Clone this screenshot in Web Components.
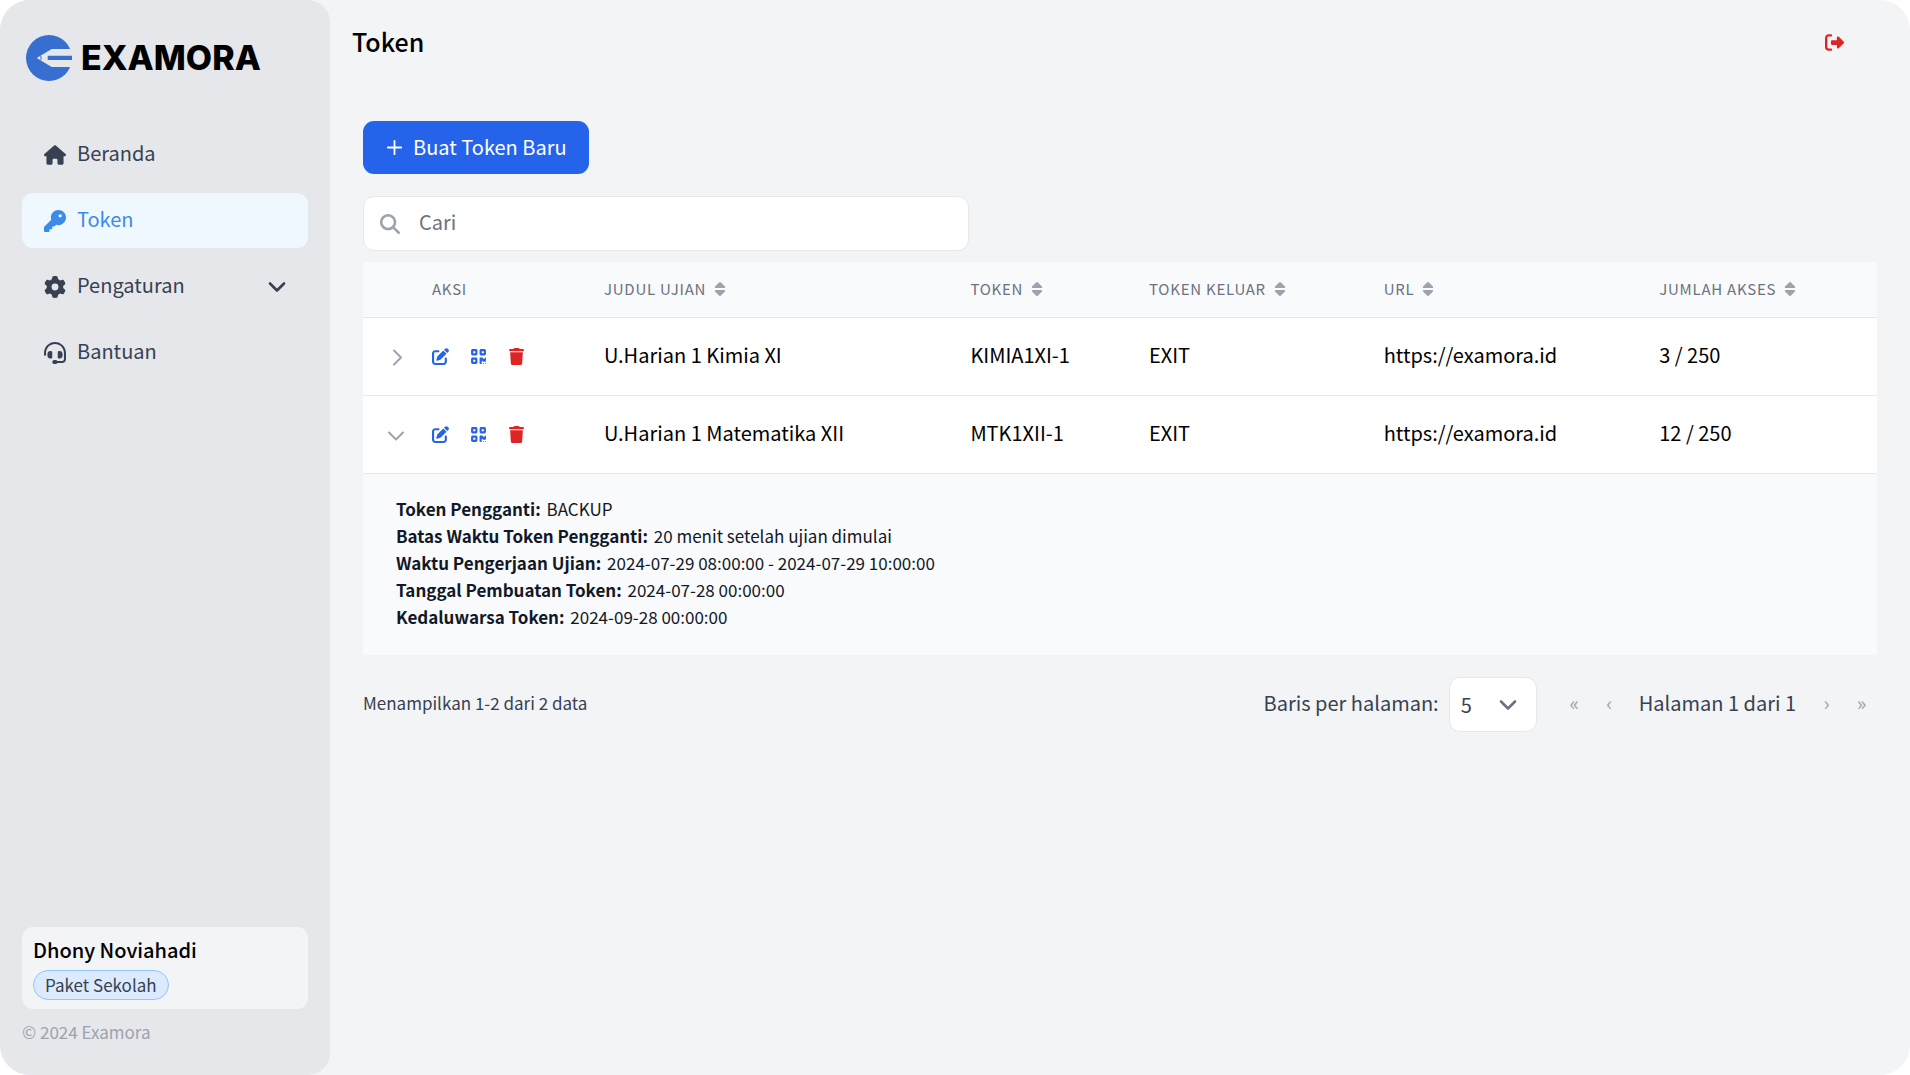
<!DOCTYPE html>
<html lang="id">
<head>
<meta charset="utf-8">
<meta name="viewport" content="width=device-width, initial-scale=1">
<title>Token - Examora</title>
<style>
  html, body { margin: 0; height: 100%; background: #fff; }
  body {
    font-family: "Noto Sans CJK JP", "Noto Sans", sans-serif;
    font-size: 20px;
    line-height: 32px;
    color: #000;
    --ink: #374151;
    --muted: #6b7280;
    --faint: #9ca3af;
    --line: #e5e7eb;
    --blue: #2563eb;
    --red: #dc2626;
    --small: 17px;
    --radius: 11px;
    /* the face sits low in its line box; labels add this below to centre the capitals */
    --lift: 4px;
  }
</style>
</head>
<body>
<exam-app>
  <exam-sidebar slot="sidebar">
    <nav-item icon="home">Beranda</nav-item>
    <nav-item icon="key" active>Token</nav-item>
    <nav-item icon="gear" expandable>Pengaturan</nav-item>
    <nav-item icon="headset">Bantuan</nav-item>
    <user-card slot="footer" plan="Paket Sekolah">Dhony Noviahadi</user-card>
    <span slot="copyright">© 2024 Examora</span>
  </exam-sidebar>
  <page-header slot="header">Token</page-header>
  <token-toolbar></token-toolbar>
  <token-table></token-table>
  <table-pager></table-pager>
</exam-app>

<script>
const ICONS = {
  home: ['0 0 576 512', 'M575.8 255.5c0 18-15 32.1-32 32.1h-32l.7 160.2c0 2.7-.2 5.4-.5 8.1V472c0 22.1-17.9 40-40 40H456c-1.1 0-2.2 0-3.3-.1c-1.4 .1-2.8 .1-4.2 .1H416 392c-22.1 0-40-17.9-40-40V448 384c0-17.7-14.3-32-32-32H256c-17.7 0-32 14.3-32 32v64 24c0 22.1-17.9 40-40 40H160 128.1c-1.5 0-3-.1-4.5-.2c-1.2 .1-2.4 .2-3.6 .2H104c-22.1 0-40-17.9-40-40V360c0-.9 0-1.9 .1-2.8V287.6H32c-18 0-32-14-32-32.1c0-9 3-17 10-24L266.4 8c7-7 15-8 22-8s15 2 21 7L564.8 231.5c8 7 12 15 11 24z'],
  key: ['0 0 512 512', 'M336 352c97.2 0 176-78.8 176-176S433.2 0 336 0S160 78.8 160 176c0 18.7 2.9 36.8 8.3 53.7L7 391c-4.5 4.5-7 10.6-7 17v80c0 13.3 10.7 24 24 24h80c13.3 0 24-10.7 24-24V448h40c13.3 0 24-10.7 24-24V384h40c6.4 0 12.5-2.5 17-7l33.3-33.3c16.9 5.4 35 8.3 53.7 8.3zM376 96a40 40 0 1 1 0 80 40 40 0 1 1 0-80z'],
  gear: ['0 0 512 512', 'M495.9 166.6c3.2 8.7 .5 18.4-6.4 24.6l-43.3 39.4c1.1 8.3 1.7 16.8 1.7 25.4s-.6 17.1-1.7 25.4l43.3 39.4c6.9 6.2 9.6 15.9 6.4 24.6c-4.4 11.9-9.7 23.3-15.8 34.3l-4.7 8.1c-6.6 11-14 21.4-22.1 31.2c-5.9 7.2-15.7 9.6-24.5 6.8l-55.7-17.7c-13.4 10.3-28.2 18.9-44 25.4l-12.5 57.1c-2 9.1-9 16.3-18.2 17.8c-13.8 2.3-28 3.5-42.5 3.5s-28.7-1.2-42.5-3.5c-9.2-1.5-16.2-8.7-18.2-17.8l-12.5-57.1c-15.8-6.5-30.6-15.1-44-25.4L83.1 425.9c-8.8 2.8-18.6 .3-24.5-6.8c-8.1-9.8-15.5-20.2-22.1-31.2l-4.7-8.1c-6.1-11-11.4-22.4-15.8-34.3c-3.2-8.7-.5-18.4 6.4-24.6l43.3-39.4C64.6 273.1 64 264.6 64 256s.6-17.1 1.7-25.4L22.4 191.2c-6.9-6.2-9.6-15.9-6.4-24.6c4.4-11.9 9.7-23.3 15.8-34.3l4.7-8.1c6.6-11 14-21.4 22.1-31.2c5.9-7.2 15.7-9.6 24.5-6.8l55.7 17.7c13.4-10.3 28.2-18.9 44-25.4l12.5-57.1c2-9.1 9-16.3 18.2-17.8C227.3 1.2 241.5 0 256 0s28.7 1.2 42.5 3.5c9.2 1.5 16.2 8.7 18.2 17.8l12.5 57.1c15.8 6.5 30.6 15.1 44 25.4l55.7-17.7c8.8-2.8 18.6-.3 24.5 6.8c8.1 9.8 15.5 20.2 22.1 31.2l4.7 8.1c6.1 11 11.4 22.4 15.8 34.3zM256 336a80 80 0 1 0 0-160 80 80 0 1 0 0 160z'],
  headset: ['0 0 512 512', 'M256 48C141.1 48 48 141.1 48 256v40c0 13.3-10.7 24-24 24s-24-10.7-24-24V256C0 114.6 114.6 0 256 0S512 114.6 512 256V400.1c0 48.6-39.4 88-88.1 88L313.6 488c-8.3 14.3-23.8 24-41.6 24H240c-26.5 0-48-21.5-48-48s21.5-48 48-48h32c17.8 0 33.3 9.7 41.6 24l110.4 .1c22.1 0 40-17.9 40-40V256c0-114.9-93.1-208-208-208zM144 208h16c17.7 0 32 14.3 32 32V352c0 17.7-14.3 32-32 32H144c-35.3 0-64-28.7-64-64V272c0-35.3 28.7-64 64-64zm224 0c35.3 0 64 28.7 64 64v48c0 35.3-28.7 64-64 64H352c-17.7 0-32-14.3-32-32V240c0-17.7 14.3-32 32-32h16z'],
  edit: ['0 0 512 512', 'M471.6 21.7c-21.9-21.9-57.3-21.9-79.2 0L362.3 51.7l97.9 97.9 30.1-30.1c21.9-21.9 21.9-57.3 0-79.2L471.6 21.7zm-299.2 220c-6.1 6.1-10.8 13.6-13.5 21.9l-29.6 88.8c-2.9 8.6-.6 18.1 5.8 24.6s15.9 8.7 24.6 5.8l88.8-29.6c8.2-2.7 15.7-7.4 21.9-13.5L437.7 172.3 339.7 74.3 172.4 241.7zM96 64C43 64 0 107 0 160V416c0 53 43 96 96 96H352c53 0 96-43 96-96V320c0-17.7-14.3-32-32-32s-32 14.3-32 32v96c0 17.7-14.3 32-32 32H96c-17.7 0-32-14.3-32-32V160c0-17.7 14.3-32 32-32h96c17.7 0 32-14.3 32-32s-14.3-32-32-32H96z'],
  qr: ['0 0 448 512', 'M0 80C0 53.5 21.5 32 48 32h96c26.5 0 48 21.5 48 48v96c0 26.5-21.5 48-48 48H48c-26.5 0-48-21.5-48-48V80zM64 96v64h64V96H64zM0 336c0-26.5 21.5-48 48-48h96c26.5 0 48 21.5 48 48v96c0 26.5-21.5 48-48 48H48c-26.5 0-48-21.5-48-48V336zm64 16v64h64V352H64zM304 32h96c26.5 0 48 21.5 48 48v96c0 26.5-21.5 48-48 48H304c-26.5 0-48-21.5-48-48V80c0-26.5 21.5-48 48-48zm80 64H320v64h64V96zM256 304c0-8.8 7.2-16 16-16h64c8.8 0 16 7.2 16 16s7.2 16 16 16h32c8.8 0 16-7.2 16-16s7.2-16 16-16s16 7.2 16 16v96c0 8.8-7.2 16-16 16H368c-8.8 0-16-7.2-16-16s-7.2-16-16-16s-16 7.2-16 16v64c0 8.8-7.2 16-16 16H272c-8.8 0-16-7.2-16-16V304zM368 480a16 16 0 1 1 0-32 16 16 0 1 1 0 32zm64 0a16 16 0 1 1 0-32 16 16 0 1 1 0 32z'],
  trash: ['0 0 448 512', 'M135.2 17.7L128 32H32C14.3 32 0 46.3 0 64S14.3 96 32 96H416c17.7 0 32-14.3 32-32s-14.3-32-32-32H320l-7.2-14.3C307.4 6.8 296.3 0 284.2 0H163.8c-12.1 0-23.2 6.8-28.6 17.7zM416 128H32L53.2 467c1.6 25.3 22.6 45 47.9 45H346.9c25.3 0 46.3-19.7 47.9-45L416 128z'],
  logout: ['0 0 512 512', 'M377.9 105.9L500.7 228.7c7.2 7.2 11.3 17.1 11.3 27.3s-4.1 20.1-11.3 27.3L377.9 406.1c-6.4 6.4-15 9.9-24 9.9c-18.7 0-33.9-15.2-33.9-33.9l0-62.1-128 0c-17.7 0-32-14.3-32-32l0-64c0-17.7 14.3-32 32-32l128 0 0-62.1c0-18.7 15.2-33.9 33.9-33.9c9 0 17.6 3.6 24 9.9zM160 96L96 96c-17.7 0-32 14.3-32 32l0 256c0 17.7 14.3 32 32 32l64 0c17.7 0 32 14.3 32 32s-14.3 32-32 32l-64 0c-53 0-96-43-96-96L0 128C0 75 43 32 96 32l64 0c17.7 0 32 14.3 32 32s-14.3 32-32 32z'],
  search: ['0 0 512 512', 'M416 208c0 45.9-14.9 88.3-40 122.7L502.6 457.4c12.5 12.5 12.5 32.8 0 45.3s-32.8 12.5-45.3 0L330.7 376c-34.4 25.2-76.8 40-122.7 40C93.1 416 0 322.9 0 208S93.1 0 208 0S416 93.1 416 208zM208 352a144 144 0 1 0 0-288 144 144 0 1 0 0 288z'],
  sort: ['0 0 12 16', 'M5.3 1.3a1 1 0 0 1 1.4 0L11 5.4a.9.9 0 0 1-.7 1.5H1.7A.9.9 0 0 1 1 5.4zM5.3 14.7a1 1 0 0 0 1.4 0L11 10.6a.9.9 0 0 0-.7-1.5H1.7a.9.9 0 0 0-.7 1.5z'],
};
const LINES = {
  plus: ['0 0 19 19', 'M9.5 2.8v13.4M2.8 9.5h13.4', 1.8],
  down: ['0 0 18 18', 'M2 5.5l7 7 7-7', 2.6],
  rowRight: ['0 0 18 18', 'M7 2.5l7 7-7 7', 2],
  rowDown: ['0 0 18 18', 'M2 6.5l7 7 7-7', 2],
};

const define = (name, html, setup) =>
  customElements.define(name, class extends HTMLElement {
    constructor() {
      super();
      const t = document.createElement('template');
      t.innerHTML = html;
      this.attachShadow({ mode: 'open' }).append(t.content.cloneNode(true));
    }
    connectedCallback() { if (setup) setup(this, this.shadowRoot); }
  });

const RESET = `
  * { box-sizing: border-box; }
  button { font: inherit; color: inherit; background: none; border: 0; padding: 0; margin: 0; cursor: pointer; }
`;

define('exam-icon', `<style>
  :host { display: inline-flex; flex: none; width: 22px; height: 22px; }
  svg { width: 100%; height: 100%; display: block; }
</style><svg aria-hidden="true"><path/></svg>`, (el, root) => {
  const name = el.getAttribute('name');
  if (!name) return;
  const [box, d, stroke] = ICONS[name] || LINES[name];
  const path = root.querySelector('path');
  root.querySelector('svg').setAttribute('viewBox', box);
  path.setAttribute('d', d);
  path.setAttribute('fill', stroke ? 'none' : 'currentColor');
  if (stroke) {
    path.setAttribute('stroke', 'currentColor');
    path.setAttribute('stroke-width', stroke);
    path.setAttribute('stroke-linecap', 'round');
    path.setAttribute('stroke-linejoin', 'round');
  }
});

define('exam-app', `<style>${RESET}
  :host { display: flex; min-height: 100%; background: #f3f4f6; border-radius: 30px; overflow: hidden; }
  .page { flex: 1; min-width: 0; display: flex; flex-direction: column; }
  main { padding: 33px; display: flex; flex-direction: column; }
</style>
<slot name="sidebar"></slot>
<div class="page"><slot name="header"></slot><main><slot></slot></main></div>`);

define('exam-logo', `<style>
  :host { display: flex; align-items: center; gap: 9px; padding: 0 4px; }
  svg { width: 46px; height: 46px; display: block; flex: none; }
  span { font: 800 34px/46px Inter, "Open Sans", sans-serif; }
</style>
<svg viewBox="0 0 46 46" aria-hidden="true">
  <circle cx="23" cy="23" r="23" fill="#376fd0"/>
  <path d="M46 14H25.7L10.7 23l15 9H46z" fill="#e5e7eb"/>
  <path d="M21.7 20.8H46v4.2H21.7z" fill="#376fd0"/>
  <path d="M14.3 21c1.3 1.2 1.3 2.9 0 4.1" fill="none" stroke="#376fd0"/>
</svg><span>EXAMORA</span>`);

define('exam-sidebar', `<style>${RESET}
  :host { display: flex; flex-direction: column; flex: none; width: 330px; padding: 35px 22px 29px; box-sizing: border-box;
    background: #e5e7eb; border-radius: 0 22px 22px 0; }
  nav { display: flex; flex-direction: column; gap: 11px; margin-top: 46px; flex: 1; }
  footer { color: var(--faint); font-size: var(--small); line-height: 28px; display: flex; flex-direction: column; gap: 9px; }
</style>
<exam-logo></exam-logo>
<nav><slot></slot></nav>
<footer><slot name="footer"></slot><slot name="copyright"></slot></footer>`);

define('nav-item', `<style>${RESET}
  :host { display: block; color: var(--ink); }
  a { display: flex; align-items: center; gap: 11px; height: 55px; padding: 0 22px; border-radius: var(--radius); color: inherit; text-decoration: none; }
  :host([active]) a { background: #f0f8ff; color: #3b8beb; }
  .label { flex: 1; padding-bottom: var(--lift); }
  .more { display: none; width: 18px; height: 18px; }
  :host([expandable]) .more { display: flex; }
</style>
<a href="#"><span class="label"><slot></slot></span><exam-icon class="more" name="down"></exam-icon></a>`,
(el, root) => {
  const link = root.querySelector('a');
  const icon = document.createElement('exam-icon');
  icon.setAttribute('name', el.getAttribute('icon'));
  link.prepend(icon);
  if (el.hasAttribute('active')) link.setAttribute('aria-current', 'page');
});

define('user-card', `<style>${RESET}
  :host { display: flex; flex-direction: column; align-items: flex-start; gap: 5px; background: #f3f4f6; border-radius: var(--radius);
    padding: 8px 11px 9px; color: #000; }
  .name { font-weight: 500; font-size: 20px; line-height: 30px; }
  .plan { border: 1px solid #93c5fd; border-radius: 15px; background: #dbeafe; color: var(--ink); font-size: var(--small); line-height: 28px; padding: 0 11px; }
</style>
<span class="name"><slot></slot></span><span class="plan"></span>`,
(el, root) => { root.querySelector('.plan').textContent = el.getAttribute('plan'); });

define('page-header', `<style>${RESET}
  :host { display: flex; align-items: center; justify-content: space-between; padding: 20px 66px 24px 22px; }
  h1 { margin: 0; padding-bottom: 2px; font-size: 25px; font-weight: 500; line-height: 42px; }
  button { color: var(--red); display: flex; }
  exam-icon { width: 19px; height: 19px; }
</style>
<h1><slot></slot></h1><button aria-label="Keluar"><exam-icon name="logout"></exam-icon></button>`);

define('token-toolbar', `<style>${RESET}
  :host { display: flex; flex-direction: column; align-items: flex-start; gap: 22px; }
  button { display: flex; align-items: center; gap: 9px; height: 53px; padding: 0 22px; border-radius: var(--radius); background: var(--blue); color: #fff; }
  button exam-icon { width: 19px; height: 19px; }
  button span { padding-bottom: 2px; }
  label { display: flex; align-items: center; gap: 19px; width: 40%; height: 55px; padding: 0 16px; background: #fff;
    border: 1px solid var(--line); border-radius: var(--radius); color: var(--faint); }
  label exam-icon { width: 20px; height: 20px; }
  input { flex: 1; min-width: 0; border: 0; outline: 0; background: none; padding: 0 0 var(--lift); font: inherit; color: #000; }
  input::placeholder { color: var(--muted); opacity: 1; }
</style>
<button><exam-icon name="plus"></exam-icon><span>Buat Token Baru</span></button>
<label><exam-icon name="search"></exam-icon><input type="search" placeholder="Cari" aria-label="Cari"></label>`);

const ROWS = [
  { title: 'U.Harian 1 Kimia XI', token: 'KIMIA1XI-1', exit: 'EXIT', url: 'https://examora.id', hits: '3 / 250' },
  { title: 'U.Harian 1 Matematika XII', token: 'MTK1XII-1', exit: 'EXIT', url: 'https://examora.id', hits: '12 / 250',
    details: [
      ['Token Pengganti:', 'BACKUP'],
      ['Batas Waktu Token Pengganti:', '20 menit setelah ujian dimulai'],
      ['Waktu Pengerjaan Ujian:', '2024-07-29 08:00:00 - 2024-07-29 10:00:00'],
      ['Tanggal Pembuatan Token:', '2024-07-28 00:00:00'],
      ['Kedaluwarsa Token:', '2024-09-28 00:00:00'],
    ] },
];
const HEADS = ['Judul Ujian', 'Token', 'Token Keluar', 'URL', 'Jumlah Akses'];

define('token-table', `<style>${RESET}
  :host { display: block; margin-top: 11px; }
  table { width: 100%; border-collapse: separate; border-spacing: 0; table-layout: fixed; background: #fff; }
  th, td { text-align: left; padding: 0 0 0 22px; white-space: nowrap; border-bottom: 1px solid var(--line); }
  th { height: 56px; padding-bottom: 2px; background: #f9fafb; color: var(--muted); font-size: 15px; line-height: 22px; font-weight: 400; text-transform: uppercase; letter-spacing: .05em; }
  td { height: 78px; }
  td.value { padding-bottom: var(--lift); }
  .expand { width: 47px; } .actions { width: 172px; }
  th.title { width: 24.2%; } th.token { width: 11.8%; } th.exit { width: 15.5%; } th.url { width: 18.2%; }
  .sort { display: flex; align-items: center; gap: 8px; text-transform: inherit; letter-spacing: inherit; }
  .sort exam-icon { width: 12px; height: 16px; color: var(--faint); }
  .toggle { display: flex; color: var(--faint); }
  td:first-child { padding-left: 24px; }
  .toggle exam-icon { width: 18px; height: 18px; }
  .tools { display: flex; gap: 21px; }
  .tools button { display: flex; color: var(--blue); }
  .tools .del { color: var(--red); }
  .tools exam-icon { width: 17px; height: 17px; }
  tr.detail td { height: auto; background: #f9fafb; border: 0; padding: 21px 33px 25px; color: #111827; font-size: var(--small); line-height: 27px; white-space: normal; }
  .detail b { font-weight: 700; margin-right: 2px; }
</style>
<table><thead><tr><th class="expand"></th><th class="actions">Aksi</th></tr></thead><tbody></tbody></table>`,
(el, root) => {
  const classes = ['title', 'token', 'exit', 'url', 'hits'];
  root.querySelector('thead tr').insertAdjacentHTML('beforeend', HEADS.map((h, i) =>
    `<th class="${classes[i]}"><button class="sort"><span>${h}</span><exam-icon name="sort"></exam-icon></button></th>`).join(''));
  root.querySelector('tbody').innerHTML = ROWS.map(r => `<tr>
    <td><button class="toggle" aria-label="Rincian" aria-expanded="${!!r.details}"><exam-icon name="${r.details ? 'rowDown' : 'rowRight'}"></exam-icon></button></td>
    <td><div class="tools">
      <button aria-label="Ubah"><exam-icon name="edit"></exam-icon></button>
      <button aria-label="Kode QR"><exam-icon name="qr"></exam-icon></button>
      <button class="del" aria-label="Hapus"><exam-icon name="trash"></exam-icon></button></div></td>
    ${classes.map(c => `<td class="value">${r[c]}</td>`).join('')}</tr>` +
    (r.details ? `<tr class="detail"><td colspan="7">${r.details.map(([k, v]) => `<div><b>${k}</b> ${v}</div>`).join('')}</td></tr>` : '')).join('');
});

define('table-pager', `<style>${RESET}
  :host { display: flex; align-items: center; justify-content: space-between; margin-top: 22px; color: var(--ink); }
  .count { font-size: var(--small); padding-bottom: var(--lift); }
  .right, .pages, .size { display: flex; align-items: center; }
  .right { gap: 22px; } .size { gap: 10px; } .pages { gap: 4px; }
  .size label, .pages { padding-bottom: var(--lift); }
  .box { display: grid; align-items: center; width: 88px; height: 55px; }
  .box > * { grid-area: 1 / 1; }
  select { appearance: none; width: 100%; height: 100%; padding: 0 11px; margin: 0; font: inherit; color: inherit; background: #fff;
    border: 1px solid var(--line); border-radius: var(--radius); }
  .box exam-icon { justify-self: end; margin-right: 20px; width: 18px; height: 18px; color: var(--muted); pointer-events: none; }
  .pages button { width: 31px; color: var(--faint); font-size: 20px; }
  .now { padding: 0 11px 0 10px; }
</style>
<span class="count">Menampilkan 1-2 dari 2 data</span>
<div class="right">
  <div class="size"><label for="rows">Baris per halaman:</label>
    <div class="box"><select id="rows"><option>5</option><option>10</option><option>25</option></select><exam-icon name="down"></exam-icon></div></div>
  <div class="pages"><button aria-label="Halaman pertama">«</button><button aria-label="Sebelumnya">‹</button><span class="now">Halaman 1 dari 1</span><button aria-label="Berikutnya">›</button><button aria-label="Halaman terakhir">»</button></div>
</div>`);
</script>
</body>
</html>
